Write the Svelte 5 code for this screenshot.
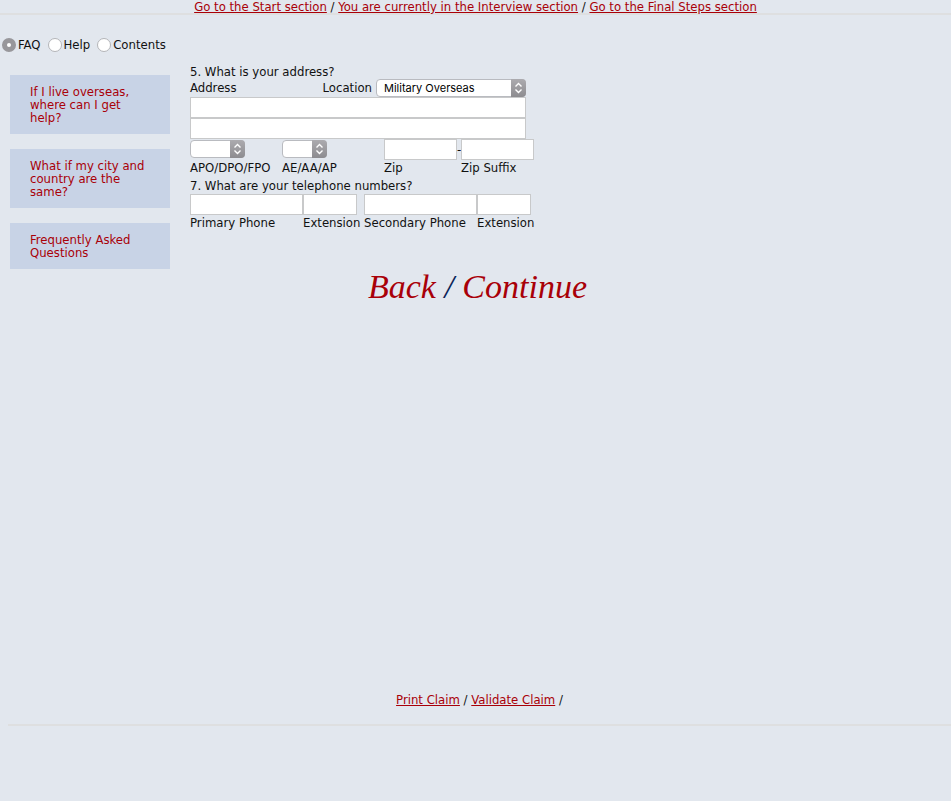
<script>
  const sections = [
    'Go to the Start section',
    'You are currently in the Interview section',
    'Go to the Final Steps section'
  ];
  const panels = ['FAQ', 'Help', 'Contents'];
  const topics = [
    'If I live overseas, where can I get help?',
    'What if my city and country are the same?',
    'Frequently Asked Questions'
  ];
  const phones = [
    { id: 'primary', label: 'Primary Phone', ext: false },
    { id: 'primary-ext', label: 'Extension', ext: true },
    { id: 'secondary', label: 'Secondary Phone', ext: false },
    { id: 'secondary-ext', label: 'Extension', ext: true }
  ];
  let panel = $state('FAQ');
</script>

{#snippet picker(id, size, options)}
  <span class="picker {size}">
    <select {id}>
      {#each options as option}<option>{option}</option>{/each}
    </select>
    <svg class="arrows" viewBox="0 0 15 18" aria-hidden="true">
      <path d="M4.5 7.5 L7.5 4.5 L10.5 7.5 M4.5 10.5 L7.5 13.5 L10.5 10.5" />
    </svg>
  </span>
{/snippet}

<div class="page">
  <nav class="sections">
    {#each sections as section, i}{#if i > 0}{' / '}{/if}<a href="#section">{section}</a>{/each}
  </nav>

  <div class="body">
    <aside>
      <div class="panels">
        {#each panels as name}
          <label><input type="radio" name="panel" value={name} bind:group={panel} />{name}</label>
        {/each}
      </div>
      <ul>
        {#each topics as topic}
          <li><a href="#topic">{topic}</a></li>
        {/each}
      </ul>
    </aside>

    <main>
      <form>
        <p>5. What is your address?</p>
        <div class="heading">
          <label for="address1">Address</label>
          <span class="location">
            <label for="location">Location</label>
            {@render picker('location', 'wide', ['Military Overseas'])}
          </span>
        </div>
        <input class="street" id="address1" type="text" />
        <input class="street" type="text" aria-label="Address line 2" />
        <div class="row postal">
          <div class="field apo">
            {@render picker('apo', 'medium', ['', 'APO', 'DPO', 'FPO'])}
            <label for="apo">APO/DPO/FPO</label>
          </div>
          <div class="field area">
            {@render picker('area', 'small', ['', 'AE', 'AA', 'AP'])}
            <label for="area">AE/AA/AP</label>
          </div>
          <div class="field zip">
            <input id="zip" type="text" />
            <label for="zip">Zip</label>
          </div>
          <span class="dash">-</span>
          <div class="field zip">
            <input id="suffix" type="text" />
            <label for="suffix">Zip Suffix</label>
          </div>
        </div>
        <p class="phone-title">7. What are your telephone numbers?</p>
        <div class="row">
          {#each phones as phone}
            <div class="field" class:phone={!phone.ext} class:ext={phone.ext}>
              <input id={phone.id} type="text" />
              <label for={phone.id}>{phone.label}</label>
            </div>
          {/each}
        </div>
      </form>
    </main>
  </div>

  <div class="steps"><a href="#back">Back</a> / <a href="#continue">Continue</a></div>

  <footer>
    <a href="#print">Print Claim</a> / <a href="#validate">Validate Claim</a> /
  </footer>
</div>

<style>
  :global(body) {
    margin: 0;
    background: #e2e7ee;
  }
  .page {
    box-sizing: border-box;
    display: flex;
    flex-direction: column;
    min-height: 100vh;
    padding-bottom: 75px;
    font: 13px/16px "DejaVu Sans Condensed", "Open Sans", sans-serif;
    color: #111;
  }
  a {
    color: #a90008;
  }
  .sections {
    height: 13px;
    line-height: 14px;
    text-align: center;
    border-bottom: 2px solid #dedfe0;
  }
  .body {
    display: flex;
    gap: 20px;
  }
  aside {
    width: 170px;
    padding-top: 22px;
  }
  .panels {
    display: flex;
    gap: 7px;
    padding-left: 2px;
  }
  .panels label {
    display: flex;
    align-items: center;
    gap: 2px;
  }
  .panels input {
    appearance: none;
    box-sizing: border-box;
    width: 14px;
    height: 14px;
    margin: 0;
    border: 1px solid #b4b5b8;
    border-radius: 50%;
    background: #fff;
  }
  .panels input:checked {
    border: 5px solid #98979b;
  }
  ul {
    display: flex;
    flex-direction: column;
    gap: 15px;
    margin: 22px 0 0 10px;
    padding: 0;
    list-style: none;
  }
  li {
    padding: 10px 20px;
    line-height: 13px;
    background: #c8d3e6;
  }
  li a {
    display: block;
    text-decoration: none;
  }
  main {
    flex: 1;
    padding-top: 49px;
  }
  p {
    margin: 0;
  }
  input[type="text"] {
    box-sizing: border-box;
    display: block;
    width: 100%;
    height: 21px;
    margin: 0;
    padding: 1px 4px;
    border: 1px solid #c8c9ca;
    background: #fff;
    font: inherit;
  }
  .heading {
    display: flex;
    justify-content: space-between;
    width: 336px;
    height: 17px;
  }
  .location {
    display: flex;
    gap: 4px;
  }
  .location .picker {
    margin-top: -1px;
  }
  form .street {
    width: 336px;
  }
  .picker {
    display: grid;
    height: 18px;
  }
  .picker select,
  .picker .arrows {
    grid-area: 1 / 1;
  }
  .picker select {
    appearance: none;
    box-sizing: border-box;
    width: 100%;
    height: 18px;
    margin: 0;
    padding: 0 15px 0 7px;
    border: 1px solid #b9bbc0;
    border-radius: 4px;
    background: #fff;
    color: #000;
    font: 11px/16px Inter, Roboto, sans-serif;
  }
  .arrows {
    justify-self: end;
    width: 15px;
    height: 18px;
    border-radius: 0 4px 4px 0;
    background: linear-gradient(#acabaf, #8d8c90);
    pointer-events: none;
  }
  .arrows path {
    fill: none;
    stroke: #fff;
    stroke-width: 1.4;
  }
  .wide {
    width: 150px;
  }
  .medium {
    width: 55px;
  }
  .small {
    width: 45px;
  }
  .row {
    display: flex;
  }
  .field {
    display: flex;
    flex-direction: column;
    height: 37px;
    justify-content: space-between;
    white-space: nowrap;
  }
  .postal .picker {
    padding-top: 1px;
  }
  .apo {
    width: 92px;
  }
  .area {
    width: 102px;
  }
  .zip {
    width: 73px;
  }
  .dash {
    width: 4px;
    line-height: 21px;
  }
  .phone-title {
    margin-top: 2px;
  }
  .phone {
    width: 113px;
  }
  .ext {
    width: 54px;
    margin-right: 7px;
  }
  .steps {
    margin: 0 0 0 4px;
    font: italic 34px/36px Georgia, "Liberation Serif", serif;
    text-align: center;
    color: #0a2458;
  }
  .steps a {
    text-decoration: none;
  }
  footer {
    margin: auto 0 0 8px;
    padding-bottom: 16px;
    text-align: center;
    border-bottom: 2px solid #dedfe0;
  }
</style>
